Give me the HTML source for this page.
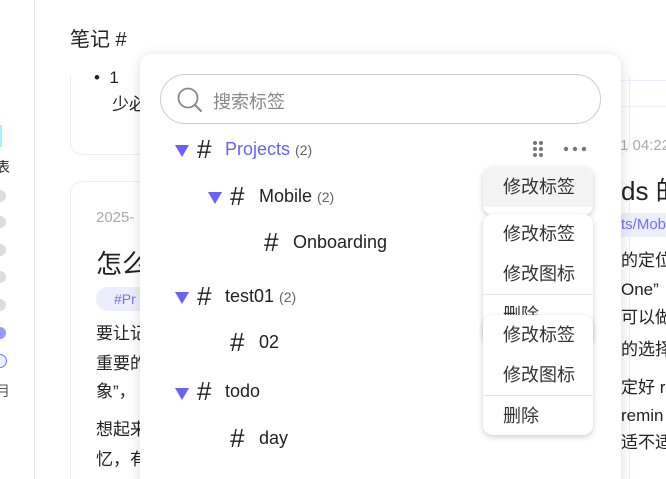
<!DOCTYPE html>
<html><head><meta charset="utf-8"><style>
*{margin:0;padding:0;box-sizing:border-box}
html,body{width:666px;height:479px;overflow:hidden}
body{background:#fff;position:relative;font-family:"Liberation Sans","Noto Sans CJK SC",sans-serif;color:#222}
.a{position:absolute;white-space:nowrap}
.card{position:absolute;border:1px solid #ececf6;border-radius:12px;background:#fff}
.t{font-size:17px;line-height:20px}
.pop{position:absolute;left:140px;top:54px;width:481px;height:440px;background:#fff;border-radius:12px;box-shadow:0 2px 12px rgba(0,0,0,.15)}
.tri{position:absolute;width:0;height:0;border-left:7px solid transparent;border-right:7px solid transparent;border-top:12px solid #6a62f5}
.lbl{position:absolute;font-size:18px;line-height:20px;color:#222;white-space:nowrap}
.cnt{font-size:14px;color:#666}
.menu{position:absolute;left:483px;width:110px;background:#fff;border-radius:10px;box-shadow:0 2px 6px rgba(0,0,0,.2);overflow:hidden}
.mi{height:40px;line-height:40px;font-size:18px;padding-left:20px;color:#333}
.sep{border-top:1px solid #e5e5e5}
</style></head><body>
<div class="a" style="left:34px;top:0;width:1px;height:479px;background:#e6e6f8"></div>
<div class="a" style="left:0;top:125px;width:2px;height:22px;background:#aef"></div>
<div class="a" style="left:-4px;top:157px;font-size:14px">表</div>
<div class="a" style="left:-6px;top:190px;width:12px;height:12px;border-radius:6px;background:#ddd"></div>
<div class="a" style="left:-6px;top:216px;width:12px;height:12px;border-radius:6px;background:#ddd"></div>
<div class="a" style="left:-6px;top:244px;width:12px;height:12px;border-radius:6px;background:#ddd"></div>
<div class="a" style="left:-6px;top:271px;width:12px;height:12px;border-radius:6px;background:#ddd"></div>
<div class="a" style="left:-6px;top:299px;width:12px;height:12px;border-radius:6px;background:#ddd"></div>
<div class="a" style="left:-6px;top:327px;width:12px;height:12px;border-radius:6px;background:#99f"></div>
<div class="a" style="left:-7px;top:354px;width:14px;height:14px;border-radius:7px;border:1px solid #77f;background:#eef"></div>
<div class="a" style="left:-4px;top:381px;font-size:14px;color:#555">月</div>

<div class="card" style="left:70px;top:60px;width:560px;height:95px;border-top:none;border-radius:0 0 12px 12px"></div>
<div class="a" style="left:36px;top:0;width:630px;height:75px;background:#fff"></div>
<div class="a" style="left:70px;top:28px;font-size:20px;line-height:24px">笔记 #</div>
<div class="a t" style="left:94px;top:68px">•&nbsp;&nbsp;1</div>
<div class="a t" style="left:112px;top:95px">少必</div>
<div class="card" style="left:70px;top:181px;width:560px;height:320px"></div>
<div class="a" style="left:96px;top:209px;font-size:15px;color:#aaa">2025-</div>
<div class="a" style="left:96px;top:244px;font-size:26px">怎么</div>
<div class="a" style="left:96px;top:287px;width:60px;height:24px;border-radius:12px;background:#eceefb;color:#7a6ff5;font-size:14px;line-height:24px;padding-left:18px">#Pr</div>
<div class="a t" style="left:96px;top:324px">要让记</div>
<div class="a t" style="left:96px;top:354px">重要的</div>
<div class="a t" style="left:96px;top:382px">象”，</div>
<div class="a t" style="left:96px;top:420px">想起来</div>
<div class="a t" style="left:96px;top:450px">忆，有</div>

<div class="a" style="left:621px;top:80px;width:45px;height:1px;background:#eeeefa"></div>
<div class="a" style="left:621px;top:106px;width:45px;height:1px;background:#eeeefa"></div>
<div class="a" style="left:620px;top:137px;font-size:15px;color:#aaa">1 04:22</div>
<div class="a" style="left:621px;top:171px;font-size:26px">ds 的</div>
<div class="a" style="left:621px;top:213px;width:45px;height:24px;background:#eceefb;color:#7a6ff5;font-size:15px;line-height:24px">ts/Mob</div>
<div class="a t" style="left:621px;top:251px">的定位</div>
<div class="a t" style="left:621px;top:280px">One”</div>
<div class="a t" style="left:621px;top:308px">可以做</div>
<div class="a t" style="left:621px;top:340px">的选择</div>
<div class="a t" style="left:621px;top:378px">定好 re</div>
<div class="a t" style="left:621px;top:406px">remin</div>
<div class="a t" style="left:621px;top:433px">适不适</div>

<div class="pop"></div>
<div class="a" style="left:160px;top:74px;width:441px;height:50px;border:1px solid #ccc;border-radius:25px"></div>
<svg class="a" style="left:176px;top:86px" width="28" height="28" viewBox="0 0 28 28"><circle cx="12" cy="12" r="9.5" fill="none" stroke="#888" stroke-width="1.8"/><path d="M19 19l6 6" stroke="#888" stroke-width="2" stroke-linecap="round"/></svg>
<div class="a" style="left:213px;top:88px;font-size:18px;color:#888">搜索标签</div>

<div class="tri" style="left:175px;top:145px"></div>
<div class="lbl" style="left:197px;top:136px;font-size:26px;line-height:26px">#</div>
<div class="lbl" style="left:225px;top:139px;color:#6a62f5">Projects <span class="cnt">(2)</span></div>
<svg class="a" style="left:532px;top:140px" width="12" height="18"><g fill="#777"><circle cx="3" cy="3" r="2"/><circle cx="9" cy="3" r="2"/><circle cx="3" cy="9" r="2"/><circle cx="9" cy="9" r="2"/><circle cx="3" cy="15" r="2"/><circle cx="9" cy="15" r="2"/></g></svg>
<svg class="a" style="left:563px;top:146px" width="24" height="6"><g fill="#777"><circle cx="3" cy="3" r="2.2"/><circle cx="12" cy="3" r="2.2"/><circle cx="21" cy="3" r="2.2"/></g></svg>

<div class="tri" style="left:208px;top:192px"></div>
<div class="lbl" style="left:230px;top:183px;font-size:26px;line-height:26px">#</div>
<div class="lbl" style="left:259px;top:186px">Mobile <span class="cnt">(2)</span></div>
<div class="lbl" style="left:264px;top:229px;font-size:26px;line-height:26px">#</div>
<div class="lbl" style="left:293px;top:232px">Onboarding</div>

<div class="tri" style="left:175px;top:292px"></div>
<div class="lbl" style="left:197px;top:283px;font-size:26px;line-height:26px">#</div>
<div class="lbl" style="left:225px;top:286px">test01 <span class="cnt">(2)</span></div>
<div class="lbl" style="left:230px;top:329px;font-size:26px;line-height:26px">#</div>
<div class="lbl" style="left:259px;top:332px">02</div>

<div class="tri" style="left:175px;top:388px"></div>
<div class="lbl" style="left:197px;top:378px;font-size:26px;line-height:26px">#</div>
<div class="lbl" style="left:225px;top:381px">todo</div>
<div class="lbl" style="left:230px;top:425px;font-size:26px;line-height:26px">#</div>
<div class="lbl" style="left:259px;top:428px">day</div>

<div class="menu" style="top:167px;height:48px"><div class="mi" style="background:#f3f3f3">修改标签</div></div>
<div class="menu" style="top:214px;height:130px"><div class="mi">修改标签</div><div class="mi">修改图标</div><div class="mi sep">删除</div></div>
<div class="menu" style="top:315px"><div class="mi">修改标签</div><div class="mi">修改图标</div><div class="mi sep">删除</div></div>
</body></html>
